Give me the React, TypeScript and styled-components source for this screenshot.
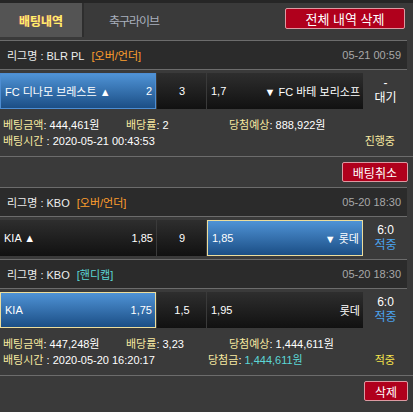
import React from 'react'
import styled, { createGlobalStyle, css } from 'styled-components'

const Global = createGlobalStyle`
  html, body { margin: 0; padding: 0; background: #3a3a3a; }
  body {
    font-family: "Liberation Sans", "Noto Sans CJK KR", sans-serif;
    font-size: 11px;
    color: #fff;
    overflow: hidden;
  }
`

type Tone = 'white' | 'blue' | 'orange' | 'cyan' | 'yellow' | 'pale' | 'gray'

const tones: Record<Tone, string> = {
  white: '#ffffff',
  blue: '#4aa3ee',
  orange: '#ff9f2e',
  cyan: '#5cd6d6',
  yellow: '#f6e44c',
  pale: '#f7e9a0',
  gray: '#a8a8a8',
}

type Game = {
  league: string
  market: string
  marketTone: Tone
  date: string
  home: string
  homeArrow?: boolean
  homeOdds: string
  draw: string
  away: string
  awayArrow?: boolean
  awayOdds: string
  pick: 'home' | 'away'
  won: boolean
  score: string
  result: string
  resultTone: Tone
}

type Slip = {
  games: Game[]
  amount: string
  odds: string
  expected: string
  time: string
  payout?: string
  status: string
  statusTone: Tone
  action: string
}

const slips: Slip[] = [
  {
    games: [
      {
        league: 'BLR PL',
        market: '[오버/언더]',
        marketTone: 'orange',
        date: '05-21 00:59',
        home: 'FC 디나모 브레스트',
        homeArrow: true,
        homeOdds: '2',
        draw: '3',
        away: 'FC 바테 보리소프',
        awayArrow: true,
        awayOdds: '1,7',
        pick: 'home',
        won: false,
        score: '-',
        result: '대기',
        resultTone: 'white',
      },
    ],
    amount: '444,461원',
    odds: '2',
    expected: '888,922원',
    time: '2020-05-21 00:43:53',
    status: '진행중',
    statusTone: 'pale',
    action: '배팅취소',
  },
  {
    games: [
      {
        league: 'KBO',
        market: '[오버/언더]',
        marketTone: 'orange',
        date: '05-20 18:30',
        home: 'KIA',
        homeArrow: true,
        homeOdds: '1,85',
        draw: '9',
        away: '롯데',
        awayArrow: true,
        awayOdds: '1,85',
        pick: 'away',
        won: true,
        score: '6:0',
        result: '적중',
        resultTone: 'blue',
      },
      {
        league: 'KBO',
        market: '[핸디캡]',
        marketTone: 'cyan',
        date: '05-20 18:30',
        home: 'KIA',
        homeOdds: '1,75',
        draw: '1,5',
        away: '롯데',
        awayOdds: '1,95',
        pick: 'home',
        won: true,
        score: '6:0',
        result: '적중',
        resultTone: 'blue',
      },
    ],
    amount: '447,248원',
    odds: '3,23',
    expected: '1,444,611원',
    time: '2020-05-20 16:20:17',
    payout: '1,444,611원',
    status: '적중',
    statusTone: 'yellow',
    action: '삭제',
  },
]

const Page = styled.div`
  width: 413px;
  height: 412px;
  overflow: hidden;
  background: #3a3a3a;
`

const TabBar = styled.div`
  display: flex;
  align-items: flex-start;
  height: 40px;
  box-sizing: border-box;
  border-top: 3px solid #262626;
`

const Tab = styled.div<{ $active?: boolean }>`
  height: 34px;
  display: flex;
  align-items: center;
  justify-content: center;
  font-size: 12px;
  ${p =>
    p.$active
      ? css`
          width: 82px;
          background: #545454;
          border-right: 2px solid #2e2e2e;
          color: #fff26a;
          font-weight: bold;
          text-shadow: -1px 0 rgba(255, 70, 120, 0.55);
        `
      : css`
          width: 100px;
          color: #a9b0bd;
          letter-spacing: -1px;
        `}
`

const RedButton = styled.button<{ $big?: boolean }>`
  margin-left: auto;
  font-family: inherit;
  color: #fff;
  background: #b0001c;
  border: 1px solid #dc9aa2;
  border-radius: 2px;
  padding: 0;
  cursor: pointer;
  ${p =>
    p.$big
      ? css`
          width: 120px;
          height: 21px;
          margin-top: 5px;
          margin-right: 8px;
          font-size: 13px;
        `
      : css`
          height: 20px;
          padding: 0 10px;
          margin-right: 5px;
          font-size: 12px;
        `}
`

const LeagueHeader = styled.div`
  width: 407px;
  height: 30px;
  box-sizing: border-box;
  background: #2b2b2b;
  border-top: 1px solid #6c6c6c;
  border-bottom: 1px solid #6c6c6c;
  display: flex;
  align-items: center;
  padding: 0 6px 0 7px;
  color: #eeeeee;
`

const Market = styled.span<{ $tone: Tone }>`
  margin-left: 7px;
  color: ${p => tones[p.$tone]};
`

const DateText = styled.span`
  margin-left: auto;
  color: #a8a8a8;
`

const MatchRow = styled.div`
  width: 407px;
  display: grid;
  grid-template-columns: 156px 49px 156px 1fr;
  column-gap: 1px;
  padding: 3px 0;
`

const Cell = styled.div<{ $picked?: boolean; $won?: boolean; $center?: boolean }>`
  height: 36px;
  box-sizing: border-box;
  display: flex;
  align-items: center;
  justify-content: ${p => (p.$center ? 'center' : 'space-between')};
  padding: 0 3px 0 4px;
  white-space: nowrap;
  overflow: hidden;
  background: linear-gradient(#2e2e2e, #111111);
  ${p =>
    p.$picked &&
    css`
      background: linear-gradient(#4f93d6, #1b4e85);
      border: 1px solid ${p.$won ? '#ecdd9c' : '#4d8dd2'};
    `}
`

const Arrow = styled.span`
  font-size: 11px;
`

const Result = styled.div`
  display: flex;
  flex-direction: column;
  align-items: center;
  justify-content: center;
  line-height: 15px;
  font-size: 12px;
`

const Toned = styled.span<{ $tone: Tone }>`
  color: ${p => tones[p.$tone]};
`

const Details = styled.div`
  padding: 5px 0 7px;
  border-bottom: 1px solid #6c6c6c;
`

const DetailRow = styled.div`
  display: flex;
  align-items: center;
  line-height: 16px;
  padding: 0 18px 0 3px;
  white-space: nowrap;
`

const Field = styled.div<{ $w?: number }>`
  ${p => (p.$w ? `width: ${p.$w}px; flex: none;` : 'flex: 1;')}
`

const Label = styled.span`
  color: #f7e9a0;
`

const ActionRow = styled.div`
  display: flex;
  padding: 5px 0 5px;
`

const TeamCell = ({ name, arrow, odds, side, picked, won }: {
  name: string; arrow?: boolean; odds: string; side: 'home' | 'away'; picked: boolean; won: boolean
}) => (
  <Cell $picked={picked} $won={won}>
    {side === 'home' ? (
      <>
        <span>{name}{arrow && <> <Arrow>▲</Arrow></>}</span>
        <span>{odds}</span>
      </>
    ) : (
      <>
        <span>{odds}</span>
        <span>{arrow && <><Arrow>▼</Arrow> </>}{name}</span>
      </>
    )}
  </Cell>
)

const GameBlock = ({ g }: { g: Game }) => (
  <>
    <LeagueHeader>
      <span>리그명 : {g.league}</span>
      <Market $tone={g.marketTone}>{g.market}</Market>
      <DateText>{g.date}</DateText>
    </LeagueHeader>
    <MatchRow>
      <TeamCell name={g.home} arrow={g.homeArrow} odds={g.homeOdds} side="home" picked={g.pick === 'home'} won={g.won} />
      <Cell $center>{g.draw}</Cell>
      <TeamCell name={g.away} arrow={g.awayArrow} odds={g.awayOdds} side="away" picked={g.pick === 'away'} won={g.won} />
      <Result>
        <span>{g.score}</span>
        <Toned $tone={g.resultTone}>{g.result}</Toned>
      </Result>
    </MatchRow>
  </>
)

const SlipBlock = ({ s }: { s: Slip }) => (
  <div>
    {s.games.map((g, i) => <GameBlock key={i} g={g} />)}
    <Details>
      <DetailRow>
        <Field $w={123}><Label>베팅금액</Label>: {s.amount}</Field>
        <Field $w={103}><Label>배당률</Label>: {s.odds}</Field>
        <Field><Label>당첨예상</Label>: {s.expected}</Field>
      </DetailRow>
      <DetailRow>
        <Field $w={205}><Label>배팅시간</Label> : {s.time}</Field>
        <Field>
          {s.payout && <><Label>당첨금</Label>: <Toned $tone="cyan">{s.payout}</Toned></>}
        </Field>
        <Toned $tone={s.statusTone}>{s.status}</Toned>
      </DetailRow>
    </Details>
    <ActionRow>
      <RedButton>{s.action}</RedButton>
    </ActionRow>
  </div>
)

const App = () => (
  <Page>
    <Global />
    <TabBar>
      <Tab $active>배팅내역</Tab>
      <Tab>축구라이브</Tab>
      <RedButton $big>전체 내역 삭제</RedButton>
    </TabBar>
    {slips.map((s, i) => <SlipBlock key={i} s={s} />)}
  </Page>
)

export default App
